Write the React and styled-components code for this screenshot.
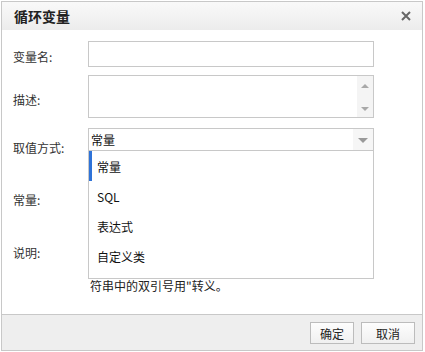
import React from "react";
import styled, { createGlobalStyle } from "styled-components";

const Global = createGlobalStyle`
  html, body { margin: 0; padding: 0; background: #fff; }
  body { font-family: "Noto Sans CJK SC", "Liberation Sans", sans-serif; font-size: 12px; color: #333; }
`;

const Dialog = styled.div`
  margin: 1px 0 0 1px;
  width: 422px;
  height: 350px;
  box-sizing: border-box;
  border: 1px solid #c8c8c8;
  display: flex;
  flex-direction: column;
  background: #fff;
`;

const TitleBar = styled.div`
  height: 28px;
  flex: none;
  display: flex;
  align-items: center;
  justify-content: space-between;
  padding: 0 10px 0 12px;
  background: linear-gradient(#f9f9f9, #ececec);
`;

const Title = styled.div`
  font-size: 14px;
  font-weight: bold;
  color: #222;
`;

const Close = styled.svg`
  width: 10px;
  height: 10px;
  margin-right: 1px;
`;

const Body = styled.div`
  flex: 1;
  padding: 11px 0 0 0;
  position: relative;
`;

const Row = styled.div`
  display: flex;
  align-items: flex-start;
  margin-bottom: ${(p) => p.$gap || 0}px;
`;

const Label = styled.div`
  width: 86px;
  flex: none;
  box-sizing: border-box;
  padding-left: 11px;
  padding-top: ${(p) => p.$offset || 0}px;
  line-height: 16px;
  color: #333;
`;

const Input = styled.div`
  width: 286px;
  height: ${(p) => p.$h}px;
  box-sizing: border-box;
  border: 1px solid #c8c8c8;
  background: #fff;
  position: relative;
  display: flex;
  justify-content: flex-end;
`;

const Scrollbar = styled.div`
  width: 16px;
  height: 100%;
  background: #f4f4f4;
  display: flex;
  flex-direction: column;
  justify-content: space-between;
  align-items: center;
  padding: 8px 0 6px;
  box-sizing: border-box;
`;

const Tri = styled.div`
  width: 0;
  height: 0;
  border-left: 4px solid transparent;
  border-right: 4px solid transparent;
  ${(p) => (p.$up ? "border-bottom: 4px solid #a8a8a8;" : "border-top: 4px solid #a8a8a8;")}
`;

const SelectWrap = styled.div`
  position: relative;
  width: 286px;
`;

const SelectBox = styled.div`
  height: 23px;
  box-sizing: border-box;
  border: 1px solid #c8c8c8;
  display: flex;
  align-items: center;
  padding-left: 2px;
  color: #111;
  font-size: 12px;
`;

const SelectText = styled.div`
  flex: 1;
`;

const Arrow = styled.div`
  width: 20px;
  height: 100%;
  background: #f6f6f6;
  display: flex;
  align-items: center;
  justify-content: center;
`;

const ArrowTri = styled.div`
  width: 0;
  height: 0;
  border-left: 5px solid transparent;
  border-right: 5px solid transparent;
  border-top: 5px solid #999;
  margin-top: 1px;
`;

const Menu = styled.div`
  position: absolute;
  top: 23px;
  left: 0;
  right: 0;
  z-index: 2;
  background: #fff;
  border: 1px solid #c8c8c8;
  border-top: none;
  padding-bottom: 7px;
`;

const Item = styled.div`
  height: 30px;
  display: flex;
  align-items: center;
  padding-left: 5px;
  color: #111;
  font-size: 12px;
  border-left: 3px solid ${(p) => (p.$active ? "#2f73d8" : "transparent")};
`;

const Help = styled.div`
  width: 286px;
  line-height: 16px;
  padding-left: 2px;
  padding-top: ${(p) => p.$offset || 0}px;
  color: #222;
`;

const Footer = styled.div`
  height: 35px;
  flex: none;
  border-top: 1px solid #c8c8c8;
  background: #eeeeee;
  display: flex;
  align-items: center;
  justify-content: flex-end;
  gap: 7px;
  padding-right: 7px;
`;

const Button = styled.button`
  height: 22px;
  padding: 0 ${(p) => p.$pad}px;
  border: 1px solid #bcbcbc;
  background: linear-gradient(#fdfdfd, #f0f0f0);
  font-family: "Noto Sans CJK SC", "Liberation Sans", sans-serif;
  font-size: 12px;
  color: #222;
  margin-top: 1px;
`;

export default function App() {
  return (
    <>
      <Global />
      <Dialog>
        <TitleBar>
          <Title>循环变量</Title>
          <Close viewBox="0 0 10 10">
            <path d="M1 1 L9 9 M9 1 L1 9" stroke="#666" strokeWidth="2" />
          </Close>
        </TitleBar>
        <Body>
          <Row $gap={8}>
            <Label $offset={8}>变量名:</Label>
            <Input $h={26} />
          </Row>
          <Row $gap={10}>
            <Label $offset={17}>描述:</Label>
            <Input $h={43}>
              <Scrollbar>
                <Tri $up />
                <Tri />
              </Scrollbar>
            </Input>
          </Row>
          <Row $gap={32}>
            <Label $offset={12}>取值方式:</Label>
            <SelectWrap>
              <SelectBox>
                <SelectText>常量</SelectText>
                <Arrow>
                  <ArrowTri />
                </Arrow>
              </SelectBox>
              <Menu>
                <Item $active>常量</Item>
                <Item>SQL</Item>
                <Item>表达式</Item>
                <Item>自定义类</Item>
              </Menu>
            </SelectWrap>
          </Row>
          <Row $gap={31}>
            <Label $offset={4}>常量:</Label>
            <Input $h={26} />
          </Row>
          <Row>
            <Label>说明:</Label>
            <Help $offset={33}>符串中的双引号用"转义。</Help>
          </Row>
        </Body>
        <Footer>
          <Button $pad={9}>确定</Button>
          <Button $pad={14}>取消</Button>
        </Footer>
      </Dialog>
    </>
  );
}
